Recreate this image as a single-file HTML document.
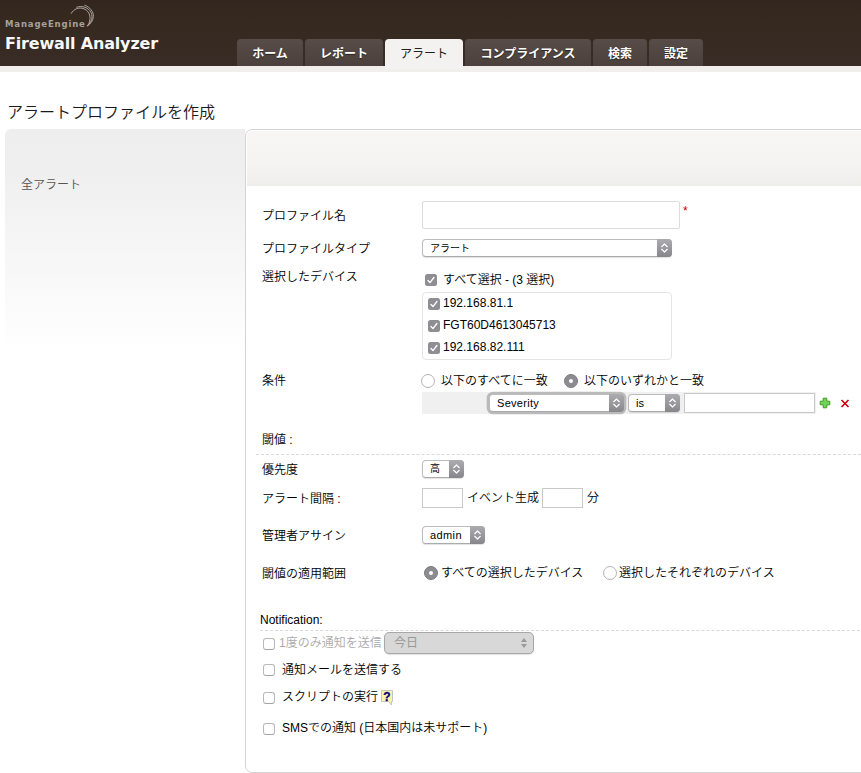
<!DOCTYPE html>
<html lang="ja">
<head>
<meta charset="utf-8">
<title>Firewall Analyzer</title>
<style>
*{box-sizing:border-box;margin:0;padding:0}
html,body{width:861px;height:773px;overflow:hidden;background:#fff}
body{font-family:"Liberation Sans","Noto Sans CJK JP",sans-serif;font-size:12px;color:#000;position:relative}
.abs{position:absolute;white-space:nowrap}
#hdr{left:0;top:0;width:861px;height:66px;background:linear-gradient(#32261f 0,#36291f 30%,#372a23 65%,#392c26 100%)}
#stripe{left:0;top:66px;width:861px;height:6px;background:#f1efeb}
.brand1{left:5px;top:17.5px;font-family:'DejaVu Sans','Liberation Sans',sans-serif;font-size:8.5px;font-weight:bold;color:#a8a09b;letter-spacing:.85px;line-height:12px}
.brand2{left:5px;top:33px;font-family:'DejaVu Sans','Liberation Sans',sans-serif;font-size:16px;font-weight:bold;color:#f8f8f8;line-height:22px;letter-spacing:-.17px}
.tab{top:39px;height:27px;background:linear-gradient(#574c47,#4b403b);border-radius:4px 4px 0 0;color:#fff;font-weight:bold;font-size:12px;line-height:30px;text-align:center;text-shadow:0 1px 1px rgba(0,0,0,.5)}
.tab.on{background:#f3f2f0;color:#222;height:30px;font-weight:normal;text-shadow:none}
h1{font-weight:350;font-size:16px;line-height:20px;left:7px;top:103px;color:#1a1a1a}
#lp{left:5px;top:129px;width:240px;height:300px;border-radius:6px 0 0 0;background:linear-gradient(#eeeeee 0,#efefef 40px,#fff 224px)}
#rp{left:245px;top:129px;width:640px;height:644px;border:1px solid #d4d4d4;border-radius:7px;background:#fff}
#rptop{left:247px;top:131px;width:620px;height:55px;background:linear-gradient(#f7f6f5 0,#f5f4f3 60%,#efeeeb 100%);border-radius:5px 0 0 0}
.lbl{font-size:12px;line-height:16px;color:#000;font-weight:350}
.inp{border:1px solid #c9c9c9;background:#fff}
.sel{border:1px solid #bcbcbc;border-bottom-color:#ababab;border-radius:4px;background:#fff;font-size:11px;line-height:16px;padding-left:7px;box-shadow:0 1px 1px rgba(0,0,0,.12)}
.sel svg{position:absolute;right:-1px;top:-1px}
.cb{width:12px;height:12px;border-radius:3px;border:1px solid #b9b9b9;border-bottom-color:#a4a4a4;background:#fff}
.ck{width:12px;height:12px}
.rd{width:14px;height:14px;border-radius:50%;border:1px solid #b4b4b4;background:#fff}
.rd.on{background:#8c8b90;border-color:#7d7c81}
.rd.on:after{content:"";position:absolute;left:4px;top:4px;width:4px;height:4px;border-radius:50%;background:#fff}
.dash{height:0;border-top:1px dashed #d9d9d9}
</style>
</head>
<body>
<svg width="0" height="0" style="position:absolute">
<defs>
<linearGradient id="ag" x1="0" y1="0" x2="0" y2="1"><stop offset="0" stop-color="#acabb0"/><stop offset="1" stop-color="#87868b"/></linearGradient>
<g id="arr"><path d="M0,0H11A4,4 0 0 1 15,4V14A4,4 0 0 1 11,18H0Z" fill="url(#ag)"/><path d="M4.7,7.7L7.5,5L10.3,7.7M4.7,10.3L7.5,13L10.3,10.3" fill="none" stroke="#fff" stroke-width="1.2" stroke-linecap="round" stroke-linejoin="round"/></g>
<g id="chk"><rect x="0" y="0" width="12" height="12" rx="2.5" fill="#8f8e93"/><path d="M3,6.5L5,8.6L8.9,3.5" fill="none" stroke="#fff" stroke-width="1.35" stroke-linecap="round" stroke-linejoin="round"/></g>
</defs>
</svg>
<div id="hdr" class="abs"></div>
<div id="stripe" class="abs"></div>
<svg class="abs" style="left:68px;top:2px" width="30" height="28" viewBox="68 2 30 28"><g fill="none" stroke="#b8b0ab" stroke-width=".9" stroke-linecap="round">
<path d="M71.3,13.3C73.5,9 79,6.8 84,8.8C90.5,11.5 92,19.5 87.6,25.8"/>
<path d="M76.8,7.2C82,5.2 88.5,7.5 91,12.5C93.3,17.5 91.5,22 87.6,25.8"/>
<path d="M84.8,5.3C90,7 93.8,12 93.4,16.5C93,20.5 91,23.5 87.6,25.8"/>
</g></svg>
<div class="abs brand1">ManageEngine</div>
<div class="abs brand2">Firewall Analyzer</div>

<div class="abs tab" style="left:237px;width:66px">ホーム</div>
<div class="abs tab" style="left:305px;width:78px">レポート</div>
<div class="abs tab on" style="left:385px;width:78px">アラート</div>
<div class="abs tab" style="left:465px;width:126px">コンプライアンス</div>
<div class="abs tab" style="left:593px;width:54px">検索</div>
<div class="abs tab" style="left:649px;width:54px">設定</div>

<h1 class="abs">アラートプロファイルを作成</h1>

<div id="lp" class="abs"></div>
<div id="rp" class="abs"></div>
<div id="rptop" class="abs"></div>
<div class="abs lbl" style="left:21px;top:177px;color:#555">全アラート</div>

<div class="abs lbl" style="left:262px;top:208px">プロファイル名</div>
<div class="abs inp" style="left:422px;top:201px;width:258px;height:28px;border-color:#dcdcdc;border-radius:2px"></div>
<div class="abs" style="left:683px;top:204px;color:#c00;font-size:12px">*</div>

<div class="abs lbl" style="left:262px;top:241px">プロファイルタイプ</div>
<div class="abs sel" style="left:422px;top:239px;width:250px;height:18px;font-size:10px;line-height:17px">アラート<svg width="15" height="18"><use href="#arr"/></svg></div>

<div class="abs lbl" style="left:262px;top:269px">選択したデバイス</div>
<svg class="abs ck" style="left:425px;top:274px"><use href="#chk"/></svg>
<div class="abs lbl" style="left:443px;top:272px">すべて選択 - (3 選択)</div>
<div class="abs" style="left:422px;top:292px;width:250px;height:68px;border:1px solid #e4e4e4;border-radius:4px"></div>
<svg class="abs ck" style="left:428px;top:298px"><use href="#chk"/></svg><div class="abs lbl" style="left:443px;top:295px">192.168.81.1</div>
<svg class="abs ck" style="left:428px;top:320px"><use href="#chk"/></svg><div class="abs lbl" style="left:443px;top:317px">FGT60D4613045713</div>
<svg class="abs ck" style="left:428px;top:342px"><use href="#chk"/></svg><div class="abs lbl" style="left:443px;top:339px">192.168.82.111</div>

<div class="abs lbl" style="left:262px;top:373px">条件</div>
<div class="abs rd" style="left:421px;top:374px"></div><div class="abs lbl" style="left:441px;top:373px">以下のすべてに一致</div>
<div class="abs rd on" style="left:564px;top:374px"></div><div class="abs lbl" style="left:584px;top:373px">以下のいずれかと一致</div>
<div class="abs" style="left:422px;top:392px;width:394px;height:22px;background:#f0f0f0"></div>
<div class="abs sel" style="left:489px;top:394px;width:135px;height:18px;box-shadow:0 0 0 2.3px #bababa;letter-spacing:.3px">Severity<svg width="15" height="18"><use href="#arr"/></svg></div>
<div class="abs sel" style="left:628px;top:394px;width:52px;height:18px">is<svg width="15" height="18"><use href="#arr"/></svg></div>
<div class="abs inp" style="left:684px;top:393px;width:131px;height:20px"></div>
<svg class="abs" style="left:819px;top:397px" width="12" height="12" viewBox="0 0 12 12"><path d="M4.2,1.2H7.8V4.2H10.8V7.8H7.8V10.8H4.2V7.8H1.2V4.2H4.2Z" fill="#72d456" stroke="#3f9c25" stroke-width="1" stroke-linejoin="round"/></svg>
<svg class="abs" style="left:840px;top:399px" width="10" height="9" viewBox="0 0 10 9"><path d="M1.5,1L8.5,8M8.5,1L1.5,8" stroke="#cc0000" stroke-width="1.6" fill="none"/></svg>

<div class="abs lbl" style="left:262px;top:432px">閾値 :</div>
<div class="abs dash" style="left:256px;top:454px;width:620px"></div>

<div class="abs lbl" style="left:262px;top:462px">優先度</div>
<div class="abs sel" style="left:422px;top:460px;width:42px;height:18px;font-size:10px">高<svg width="15" height="18"><use href="#arr"/></svg></div>

<div class="abs lbl" style="left:262px;top:491px">アラート間隔 :</div>
<div class="abs inp" style="left:422px;top:488px;width:41px;height:20px"></div>
<div class="abs lbl" style="left:467px;top:490px">イベント生成</div>
<div class="abs inp" style="left:542px;top:488px;width:41px;height:20px"></div>
<div class="abs lbl" style="left:587px;top:490px">分</div>

<div class="abs lbl" style="left:262px;top:528px">管理者アサイン</div>
<div class="abs sel" style="left:422px;top:526px;width:63px;height:18px;letter-spacing:.4px">admin<svg width="15" height="18"><use href="#arr"/></svg></div>

<div class="abs lbl" style="left:262px;top:566px">閾値の適用範囲</div>
<div class="abs rd on" style="left:424px;top:566px"></div><div class="abs lbl" style="left:441px;top:565px">すべての選択したデバイス</div>
<div class="abs rd" style="left:603px;top:566px"></div><div class="abs lbl" style="left:619px;top:565px">選択したそれぞれのデバイス</div>

<div class="abs lbl" style="left:260px;top:612px">Notification:</div>
<div class="abs dash" style="left:260px;top:630px;width:620px"></div>

<div class="abs cb" style="left:263px;top:638px"></div><div class="abs lbl" style="left:279px;top:635px;color:#aaa">1度のみ通知を送信</div>
<div class="abs sel" style="left:384px;top:632px;width:150px;height:22px;background:#d8d8d8;border-color:#a8a8a8;color:#999;line-height:20px;font-size:12px;padding-left:9px;border-radius:5px">今日<svg width="8" height="12" viewBox="0 0 8 12" style="right:5px;top:4px"><path d="M1,5L4,1L7,5ZM1,7L4,11L7,7Z" fill="#9a9a9a"/></svg></div>
<div class="abs cb" style="left:263px;top:664px"></div><div class="abs lbl" style="left:282px;top:662px">通知メールを送信する</div>
<div class="abs cb" style="left:263px;top:692px"></div><div class="abs lbl" style="left:282px;top:689px">スクリプトの実行</div>
<svg class="abs" style="left:379.5px;top:689px" width="15" height="18" viewBox="0 0 15 18"><path d="M1.5,1.5H12.5V12.5H11.5V16L8.5,12.5H1.5Z" fill="#fff4a6" stroke="#c4c4c4" stroke-width="1"/><text x="7" y="11.5" text-anchor="middle" font-family="Liberation Sans,sans-serif" font-weight="bold" font-size="12" fill="#00007f" stroke="#00007f" stroke-width=".3">?</text></svg>
<div class="abs cb" style="left:263px;top:723px"></div><div class="abs lbl" style="left:282px;top:720px">SMSでの通知 (日本国内は未サポート)</div>
</body>
</html>
